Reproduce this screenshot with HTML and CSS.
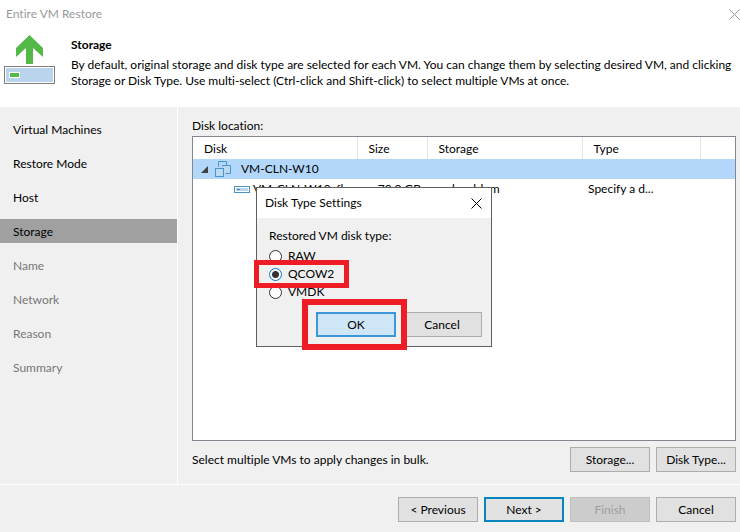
FILE: index.html
```html
<!DOCTYPE html>
<html lang="en">
<head>
    <meta charset="UTF-8">
    <meta name="viewport" content="width=device-width, initial-scale=1.0">
    <title>Entire VM Restore</title>
    <link rel="stylesheet" href="styles.css">
</head>
<body>

    <header class="header">
        <div class="titlebar">
            <span>Entire VM Restore</span>
            <button class="close" type="button" aria-label="Close">
                <svg width="11" height="11" viewBox="0 0 11 11"><path d="M0.5 0.5l10 10M10.5 0.5l-10 10" stroke="currentColor" fill="none"/></svg>
            </button>
        </div>
        <div class="intro">
            <svg class="intro-icon" width="51" height="49" viewBox="0 0 51 49">
                <path d="M25.500 0L39 13v9l-10-9v16h-7V13l-10 9v-9z" fill="#54b948"/>
                <rect x="0.500" y="31.500" width="50" height="17" fill="#bad4ed" stroke="#7d7d7d"/>
                <rect x="1.500" y="32.500" width="48" height="15" fill="none" stroke="#fff"/>
                <rect x="5.500" y="37.500" width="10" height="5" fill="#54b948" stroke="#fff"/>
            </svg>
            <div class="intro-text">
                <h1>Storage</h1>
                <p>By default, original storage and disk type are selected for each VM. You can change them by selecting desired VM, and clicking Storage or Disk Type. Use multi-select (Ctrl-click and Shift-click) to select multiple VMs at once.</p>
            </div>
        </div>
    </header>

    <div class="main">
        <nav class="steps">
            <a href="#">Virtual Machines</a>
            <a href="#">Restore Mode</a>
            <a href="#">Host</a>
            <a href="#" class="current">Storage</a>
            <a href="#" class="pending">Name</a>
            <a href="#" class="pending">Network</a>
            <a href="#" class="pending">Reason</a>
            <a href="#" class="pending">Summary</a>
        </nav>

        <section class="content">
            <div class="list-label" id="disk-location">Disk location:</div>
            <div class="list">
                <table aria-labelledby="disk-location">
                    <colgroup>
                        <col class="col-disk">
                        <col class="col-size">
                        <col class="col-storage">
                        <col class="col-type">
                        <col>
                    </colgroup>
                    <thead>
                        <tr><th>Disk</th><th>Size</th><th>Storage</th><th>Type</th><th></th></tr>
                    </thead>
                    <tbody>
                        <tr class="selected">
                            <td colspan="5">
                                <div class="vm">
                                    <svg width="7" height="7" viewBox="0 0 7 7"><path d="M7 0v7H0z" fill="#404040"/></svg>
                                    <svg width="16" height="16" viewBox="0 0 16 16" fill="#bcd9f2" stroke="#4a94c8">
                                        <path d="M3.500 5.500V0.500h8V4" fill="none"/>
                                        <path d="M7.500 5.500v-1h8v8h-5"/>
                                        <rect x="0.500" y="7.500" width="8" height="8"/>
                                    </svg>
                                    <span>VM-CLN-W10</span>
                                </div>
                            </td>
                        </tr>
                        <tr>
                            <td>
                                <div class="disk">
                                    <svg width="16" height="7" viewBox="0 0 16 7">
                                        <rect x="0.500" y="0.500" width="15" height="6" fill="#fff" stroke="#4a94c8"/>
                                        <path d="M2 2h12v3H2z" fill="#bad4ed"/>
                                        <path d="M3 3h3v1H3z" fill="#2f86c0"/>
                                    </svg>
                                    <span>VM-CLN-W10_fl...</span>
                                </div>
                            </td>
                            <td class="size">70.0 GB</td>
                            <td class="storage">local-lvm</td>
                            <td>Specify a d...</td>
                            <td></td>
                        </tr>
                    </tbody>
                </table>
            </div>
            <div class="actions">
                <span>Select multiple VMs to apply changes in bulk.</span>
                <button class="btn" type="button">Storage...</button>
                <button class="btn" type="button">Disk Type...</button>
            </div>
        </section>
    </div>

    <footer class="footer">
        <button class="btn" type="button">&lt; Previous</button>
        <button class="btn next" type="button">Next &gt;</button>
        <button class="btn" type="button" disabled>Finish</button>
        <button class="btn" type="button">Cancel</button>
    </footer>

    <form class="dialog" role="dialog" aria-labelledby="dialog-title">
        <div class="dialog-title">
            <span id="dialog-title">Disk Type Settings</span>
            <button class="close" type="button" aria-label="Close">
                <svg width="11" height="11" viewBox="0 0 11 11"><path d="M0.500 0.500l10 10M10.500 0.500l-10 10" stroke="currentColor" fill="none"/></svg>
            </button>
        </div>
        <fieldset class="dialog-body">
            <legend>Restored VM disk type:</legend>
            <label><input type="radio" name="disk-type" value="raw">RAW</label>
            <label class="marked"><input type="radio" name="disk-type" value="qcow2" checked>QCOW2</label>
            <label><input type="radio" name="disk-type" value="vmdk">VMDK</label>
        </fieldset>
        <div class="dialog-buttons">
            <span class="marked"><button class="btn ok" type="button">OK</button></span>
            <button class="btn" type="button">Cancel</button>
        </div>
    </form>

</body>
</html>
```

FILE: styles.css
```css
* {
    box-sizing: border-box;
}

body {
    margin: 0;
    min-height: 100vh;
    display: flex;
    flex-direction: column;
    position: relative;
    overflow: hidden;
    background-color: #f0f0f0;
    color: #000;
    font: 12px/16px "Segoe UI", Lato, "Open Sans", sans-serif;
    font-variant-ligatures: none;
}

svg {
    display: block;
    flex: none;
}

/* Header */
.header {
    height: 107px;
    background-color: #fff;
}

.titlebar {
    display: flex;
    justify-content: space-between;
    align-items: center;
    height: 28px;
    padding-left: 6px;
    color: #999;
}

.close {
    padding: 0;
    border: none;
    background: none;
    color: inherit;
}

.intro {
    display: flex;
    gap: 16px;
    padding: 7px 0 0 4px;
}

.intro-text {
    flex: 1;
    padding-top: 2px;
}

.intro h1 {
    margin: 0 0 4px;
    font-size: 12px;
    line-height: 16px;
}

.intro p {
    margin: 0;
}

/* Steps */
.main {
    flex: 1;
    display: flex;
    border-bottom: 1px solid #fff;
}

.steps {
    width: 178px;
    padding-top: 10px;
    border-right: 1px solid #fff;
    display: flex;
    flex-direction: column;
    gap: 10px;
}

.steps a {
    padding: 5px 13px 3px;
    color: #000;
    text-decoration: none;
}

.steps .current {
    background-color: #a0a0a0;
}

.steps .pending {
    color: #777;
}

/* Disk list */
.content {
    flex: 1;
    display: flex;
    flex-direction: column;
    padding: 11px 4px 12px 14px;
}

.list-label {
    margin-bottom: 2px;
}

.list {
    flex: 1;
    border: 1px solid #828790;
    background-color: #fff;
}

table {
    width: 100%;
    table-layout: fixed;
    border-collapse: collapse;
}

.col-disk { width: 164px; }
.col-size { width: 70px; }
.col-storage { width: 155px; }
.col-type { width: 118px; }

th {
    height: 22px;
    padding: 2px 11px 0;
    border-right: 1px solid #e5e5e5;
    font-weight: normal;
    text-align: left;
}

th:last-child {
    border-right: none;
}

td {
    height: 20px;
    padding: 0 6px;
    white-space: nowrap;
}

.selected {
    background-color: #b3d7fb;
}

.vm, .disk {
    display: flex;
    align-items: center;
}

.vm {
    gap: 7px;
    padding-left: 2px;
}

.vm span {
    padding-left: 3px;
}

.disk {
    gap: 3px;
    padding-left: 35px;
}

.size {
    text-align: right;
}

.storage {
    padding-left: 25px;
}

.actions {
    display: flex;
    align-items: center;
    gap: 6px;
    padding-top: 6px;
}

.actions span {
    flex: 1;
}

/* Buttons */
.btn {
    width: 80px;
    height: 25px;
    padding: 0;
    border: 1px solid #adadad;
    background-color: #e1e1e1;
    color: #000;
    font: inherit;
}

.btn:disabled {
    border-color: #bfbfbf;
    background-color: #ccc;
    color: #a0a0a0;
}

.next {
    border: 2px solid #0a84bd;
}

.ok {
    border: 2px solid #3c97da;
    background-color: #cfe6f9;
}

.footer {
    display: flex;
    justify-content: flex-end;
    gap: 6px;
    padding: 12px 4px 10px;
}

/* Dialog */
.dialog {
    position: absolute;
    top: 187px;
    left: 256px;
    width: 236px;
    border: 1px solid #5f5f5f;
    background-color: #f0f0f0;
}

.dialog-title {
    display: flex;
    justify-content: space-between;
    align-items: center;
    height: 30px;
    padding: 0 9px 0 8px;
    background-color: #fff;
}

.dialog-body {
    margin: 0;
    padding: 10px 12px 0;
    border: none;
}

.dialog-body legend {
    float: left;
    width: 100%;
    margin-bottom: 3px;
    padding: 0;
}

.dialog-body label {
    clear: left;
    display: flex;
    align-items: center;
    gap: 6px;
    width: 75px;
    height: 18px;
}

.dialog-body input {
    appearance: none;
    width: 13px;
    height: 13px;
    margin: 0;
    border: 1px solid #333;
    border-radius: 50%;
    background-color: #fff;
}

.dialog-body input:checked {
    border-color: #0078d7;
    background: radial-gradient(circle, #333 3px, #fff 4px);
}

.dialog-buttons {
    display: flex;
    justify-content: flex-end;
    gap: 6px;
    padding: 11px 9px 9px;
}

/* Highlight frames */
.marked {
    position: relative;
}

.marked::after {
    content: "";
    position: absolute;
    inset: -5px -5px -5px -15px;
    border: 5px solid #ee1c24;
    pointer-events: none;
}

.dialog-buttons .marked {
    z-index: 1;
}

.dialog-buttons .marked::after {
    inset: -13px -11px -13px -14px;
    border-width: 6px;
}
```
